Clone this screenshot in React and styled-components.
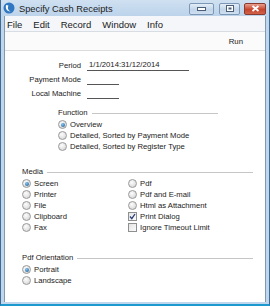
import React from 'react';
import styled, { createGlobalStyle } from 'styled-components';

const GlobalStyle = createGlobalStyle`
  html, body {
    margin: 0;
    padding: 0;
    background: #ffffff;
  }
  body {
    font-family: 'Liberation Sans', Arial, sans-serif;
    font-size: 9px;
    color: #1a1a1a;
  }
`;

// Window frame
const Frame = styled.div`
  width: 270px;
  height: 306px;
  box-sizing: border-box;
  display: flex;
  flex-direction: column;
  background: #bfd6ec;
  border-left: 1px solid #3f6a92;
  border-right: 1px solid #3f6a92;
  border-bottom: 2px solid #1c9ad0;
  padding: 0 3px 2px 3px;
  overflow: hidden;
`;

const TitleBar = styled.div`
  height: 16px;
  display: flex;
  align-items: center;
  gap: 4px;
  padding-left: 2px;
  margin: 0 -3px;
  padding-right: 3px;
  background: linear-gradient(#cfe0f1, #bcd3ea);
`;

const Title = styled.span`
  flex: 1;
  font-size: 9.3px;
  color: #1c1c1c;
  padding-top: 2px;
`;

const Caption = styled.div`
  width: ${(p) => p.w}px;
  height: 12px;
  margin-top: 1px;
  border: 1px solid ${(p) => (p.close ? '#8a3a2e' : '#7d98b6')};
  border-radius: 2px;
  box-sizing: border-box;
  display: flex;
  align-items: center;
  justify-content: center;
  background: ${(p) =>
    p.close
      ? 'linear-gradient(#e8a08e, #c7452d 55%, #d0634a)'
      : 'linear-gradient(#e3edf7, #c2d5e9 55%, #cfdff0)'};
  margin-right: ${(p) => p.mr || 0}px;
`;

const Body = styled.div`
  flex: 1;
  display: flex;
  flex-direction: column;
  background: #ffffff;
  border-left: 1px solid #7f99b3;
  border-right: 1px solid #7f99b3;
`;

const MenuBar = styled.div`
  height: 15px;
  display: flex;
  align-items: center;
  background: #f4f6f9;
  border-bottom: 1px solid #d8dde3;
  padding-left: 2px;
`;

const MenuItem = styled.span`
  font-size: 9.5px;
  padding: 1px 0 0 0;
  margin-right: ${(p) => p.gap}px;
`;

const Toolbar = styled.div`
  height: 18px;
  display: flex;
  align-items: center;
  justify-content: flex-end;
  padding-right: 22px;
  border-bottom: 1px solid #dcdcdc;
  background: #fbfbfb;
  font-size: 7.8px;
`;

const Content = styled.div`
  display: flex;
  flex-direction: column;
  padding-top: 7px;
  font-size: 7.7px;
`;

const FieldRow = styled.div`
  display: grid;
  grid-template-columns: 76px auto;
  column-gap: 6px;
  height: 14px;
  align-items: center;
`;

const FieldLabel = styled.span`
  text-align: right;
`;

const FieldValue = styled.span`
  width: ${(p) => p.w}px;
  height: 10px;
  line-height: 10px;
  border-bottom: 1px solid #555;
  padding-left: 2px;
`;

const Group = styled.div`
  display: flex;
  flex-direction: column;
  margin-left: ${(p) => p.left}px;
  margin-top: ${(p) => p.top}px;
  width: ${(p) => p.w}px;
`;

const GroupHead = styled.div`
  display: flex;
  align-items: center;
  gap: 4px;
  height: 12px;
  margin-bottom: 1px;
  &::after {
    content: '';
    flex: 1;
    border-top: 1px solid #c6c6c6;
    margin-top: 3px;
  }
`;

const Columns = styled.div`
  display: grid;
  grid-template-columns: 106px auto;
`;

const Option = styled.div`
  display: flex;
  align-items: center;
  gap: 3px;
  height: 11px;
`;

const RadioDot = styled.span`
  width: 9px;
  height: 9px;
  box-sizing: border-box;
  border-radius: 50%;
  border: 1px solid #9a9a9a;
  background: radial-gradient(circle at 40% 35%, #fdfdfd, #d0d0d0);
  position: relative;
  &::after {
    content: '';
    display: ${(p) => (p.on ? 'block' : 'none')};
    position: absolute;
    left: 1.5px;
    top: 1.5px;
    width: 4px;
    height: 4px;
    border-radius: 50%;
    background: radial-gradient(circle at 40% 35%, #7fc4f0, #16548e);
  }
`;

const Box = styled.span`
  width: 9px;
  height: 9px;
  box-sizing: border-box;
  border: 1px solid #8e8f8f;
  background: linear-gradient(135deg, #e4e4e4, #fbfbfb);
  display: flex;
  align-items: center;
  justify-content: center;
`;

function Radio({ on, children }) {
  return (
    <Option>
      <RadioDot on={on ? 1 : 0} />
      <span>{children}</span>
    </Option>
  );
}

function Check({ on, children }) {
  return (
    <Option>
      <Box>
        {on && (
          <svg width="7" height="7" viewBox="0 0 7 7">
            <path d="M1 3.5 L2.8 5.6 L6 1" fill="none" stroke="#2a3f7a" strokeWidth="1.3" />
          </svg>
        )}
      </Box>
      <span>{children}</span>
    </Option>
  );
}

function AppLogo() {
  return (
    <svg width="12" height="12" viewBox="0 0 12 12">
      <circle cx="6" cy="6" r="5.5" fill="#2f77c0" />
      <path d="M3.2 3 C2 6 3.6 9.6 7.6 9.4 C5 8.4 4.2 6 5.4 3.4 Z" fill="#ffffff" />
    </svg>
  );
}

export default function App() {
  return (
    <>
      <GlobalStyle />
      <Frame>
        <TitleBar>
          <AppLogo />
          <Title>Specify Cash Receipts</Title>
          <Caption w={25} mr={1}>
            <svg width="9" height="4" viewBox="0 0 9 4">
              <rect x="0.5" y="0.5" width="8" height="3" fill="#fff" stroke="#4a5e78" />
            </svg>
          </Caption>
          <Caption w={21} mr={0}>
            <svg width="8" height="7" viewBox="0 0 8 7">
              <rect x="0.5" y="0.5" width="7" height="6" fill="#fff" stroke="#4a5e78" />
              <rect x="2.5" y="2.5" width="3" height="2" fill="#4a5e78" />
            </svg>
          </Caption>
          <Caption w={22} close>
            <svg width="9" height="7" viewBox="0 0 9 7">
              <path d="M1.5 1 L7.5 6 M7.5 1 L1.5 6" stroke="#ffffff" strokeWidth="1.8" />
            </svg>
          </Caption>
        </TitleBar>
        <Body>
          <MenuBar>
            <MenuItem gap={11}>File</MenuItem>
            <MenuItem gap={11}>Edit</MenuItem>
            <MenuItem gap={11}>Record</MenuItem>
            <MenuItem gap={11}>Window</MenuItem>
            <MenuItem gap={0}>Info</MenuItem>
          </MenuBar>
          <Toolbar>Run</Toolbar>
          <Content>
            <FieldRow>
              <FieldLabel>Period</FieldLabel>
              <FieldValue w={100}>1/1/2014:31/12/2014</FieldValue>
            </FieldRow>
            <FieldRow>
              <FieldLabel>Payment Mode</FieldLabel>
              <FieldValue w={30} />
            </FieldRow>
            <FieldRow>
              <FieldLabel>Local Machine</FieldLabel>
              <FieldValue w={30} />
            </FieldRow>

            <Group left={53} top={6} w={160}>
              <GroupHead>Function</GroupHead>
              <Radio on>Overview</Radio>
              <Radio>Detailed, Sorted by Payment Mode</Radio>
              <Radio>Detailed, Sorted by Register Type</Radio>
            </Group>

            <Group left={17} top={13} w={231}>
              <GroupHead>Media</GroupHead>
              <Columns>
                <div>
                  <Radio on>Screen</Radio>
                  <Radio>Printer</Radio>
                  <Radio>File</Radio>
                  <Radio>Clipboard</Radio>
                  <Radio>Fax</Radio>
                </div>
                <div>
                  <Radio>Pdf</Radio>
                  <Radio>Pdf and E-mail</Radio>
                  <Radio>Html as Attachment</Radio>
                  <Check on>Print Dialog</Check>
                  <Check>Ignore Timeout Limit</Check>
                </div>
              </Columns>
            </Group>

            <Group left={17} top={18} w={231}>
              <GroupHead>Pdf Orientation</GroupHead>
              <Radio on>Portrait</Radio>
              <Radio>Landscape</Radio>
            </Group>
          </Content>
        </Body>
      </Frame>
    </>
  );
}
